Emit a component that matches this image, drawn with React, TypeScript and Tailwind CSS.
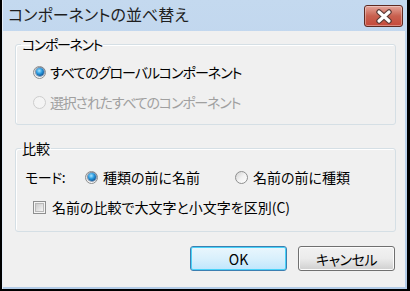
import React from 'react';

const font = "[font-family:'Noto_Sans_CJK_JP','Noto_Sans',sans-serif] [font-feature-settings:'palt']";

function Radio({ checked, disabled }: { checked?: boolean; disabled?: boolean }) {
    return (
        <span
            className={`relative flex h-[13px] w-[13px] shrink-0 items-center justify-center rounded-full border ${
                disabled
                    ? 'border-[#cdcdcd] bg-[#f4f4f4]'
                    : 'border-[#8e8f8f] bg-gradient-to-br from-[#d2d2d2] via-[#f2f2f2] to-[#fefefe]'
            }`}
        >
            {checked && (
                <span className="h-[8px] w-[8px] rounded-full bg-[radial-gradient(circle_at_40%_35%,#a8e4ff_0%,#2a9be0_40%,#0d4f8f_80%,#123a66_100%)] shadow-[0_0_0_1px_rgba(20,60,110,0.5)]" />
            )}
        </span>
    );
}

function Checkbox() {
    return (
        <span className="flex h-[13px] w-[13px] shrink-0 items-center justify-center border border-[#8e8f8f] bg-[#f4f4f4]">
            <span className="h-[9px] w-[9px] border border-[#b8b8b8] bg-gradient-to-br from-[#cbcbcb] to-[#f5f5f5]" />
        </span>
    );
}

export default function App() {
    return (
        <div className={`flex h-[291px] w-[410px] flex-col bg-black pb-[2px] pl-[2px] pr-[3px] text-black ${font}`}>
            <div className="flex flex-1 flex-col border-l border-[#e3edf8] bg-gradient-to-b from-[#c4d9ef] to-[#b3cce8] pb-[2px] pr-[2px]">
                {/* title bar */}
                <div className="flex h-[31px] shrink-0 items-start justify-between">
                    <span className="mt-[3px] pl-[5px] text-[16px] leading-[22px] text-[#1e1e1e]">コンポーネントの並べ替え</span>
                    <button className="mr-[2px] mt-[5px] flex h-[22px] w-[39px] items-center justify-center rounded-[3px] border border-[#5e2a22] bg-gradient-to-b from-[#e4a59b] via-[#c8604f] to-[#c5493a] shadow-[inset_0_0_0_1px_rgba(255,255,255,0.35)]">
                        <svg width="18" height="15" viewBox="0 0 18 15">
                            <path
                                d="M4 3 L14 12 M14 3 L4 12"
                                fill="none"
                                stroke="#5a3a36"
                                strokeWidth="5.5"
                                strokeLinecap="round"
                            />
                            <path d="M4 3 L14 12 M14 3 L4 12" fill="none" stroke="#ffffff" strokeWidth="3.2" strokeLinecap="round" />
                        </svg>
                    </button>
                </div>

                {/* client area */}
                <div className="flex flex-1 flex-col bg-[#f0f0f0] pl-[12px] pr-[9px] pt-[5px] text-[14px] leading-[16px]">
                    <fieldset className="rounded-[3px] border border-[#d5dfe5] pb-[12px] pl-[17px] shadow-[inset_1px_1px_0_#ffffff]">
                        <legend className="-ml-[12px] px-[1px] tracking-[-1.4px]">コンポーネント</legend>
                        <div className="mt-[10px] flex h-[20px] items-center gap-[4px]">
                            <Radio checked />
                            <span className="tracking-[-1px]">すべてのグローバルコンポーネント</span>
                        </div>
                        <div className="mt-[10px] flex h-[20px] items-center gap-[4px] text-[#a0a0a0]">
                            <Radio disabled />
                            <span className="tracking-[-1.2px]">選択されたすべてのコンポーネント</span>
                        </div>
                    </fieldset>

                    <fieldset className="mt-[15px] rounded-[3px] border border-[#d5dfe5] pb-[14px] pl-[9px] shadow-[inset_1px_1px_0_#ffffff]">
                        <legend className="-ml-[4px] px-[1px]">比較</legend>
                        <div className="mt-[11px] flex h-[20px] items-center">
                            <span className="w-[60px] tracking-[-0.5px]">モード:</span>
                            <Radio checked />
                            <span className="ml-[5px] w-[132px]">種類の前に名前</span>
                            <Radio />
                            <span className="ml-[5px]">名前の前に種類</span>
                        </div>
                        <div className="ml-[8px] mt-[10px] flex h-[20px] items-center gap-[6px]">
                            <Checkbox />
                            <span>名前の比較で大文字と小文字を区別(C)</span>
                        </div>
                    </fieldset>

                    <div className="mt-[14px] flex justify-end gap-[11px] pr-[1px]">
                        <button className="h-[25px] w-[97px] rounded-[3px] border border-[#3c7fb1] bg-gradient-to-b from-[#eaf6fd] via-[#d9f0fc] to-[#bee6fd] text-[14px] shadow-[inset_0_0_0_1px_#48d2f8]">
                            OK
                        </button>
                        <button className="h-[25px] w-[97px] rounded-[3px] border border-[#707070] bg-gradient-to-b from-[#f2f2f2] via-[#ebebeb] to-[#cfcfcf] text-[14px] tracking-[-0.5px] shadow-[inset_0_0_0_1px_#fcfcfc]">
                            キャンセル
                        </button>
                    </div>
                </div>
            </div>
        </div>
    );
}
